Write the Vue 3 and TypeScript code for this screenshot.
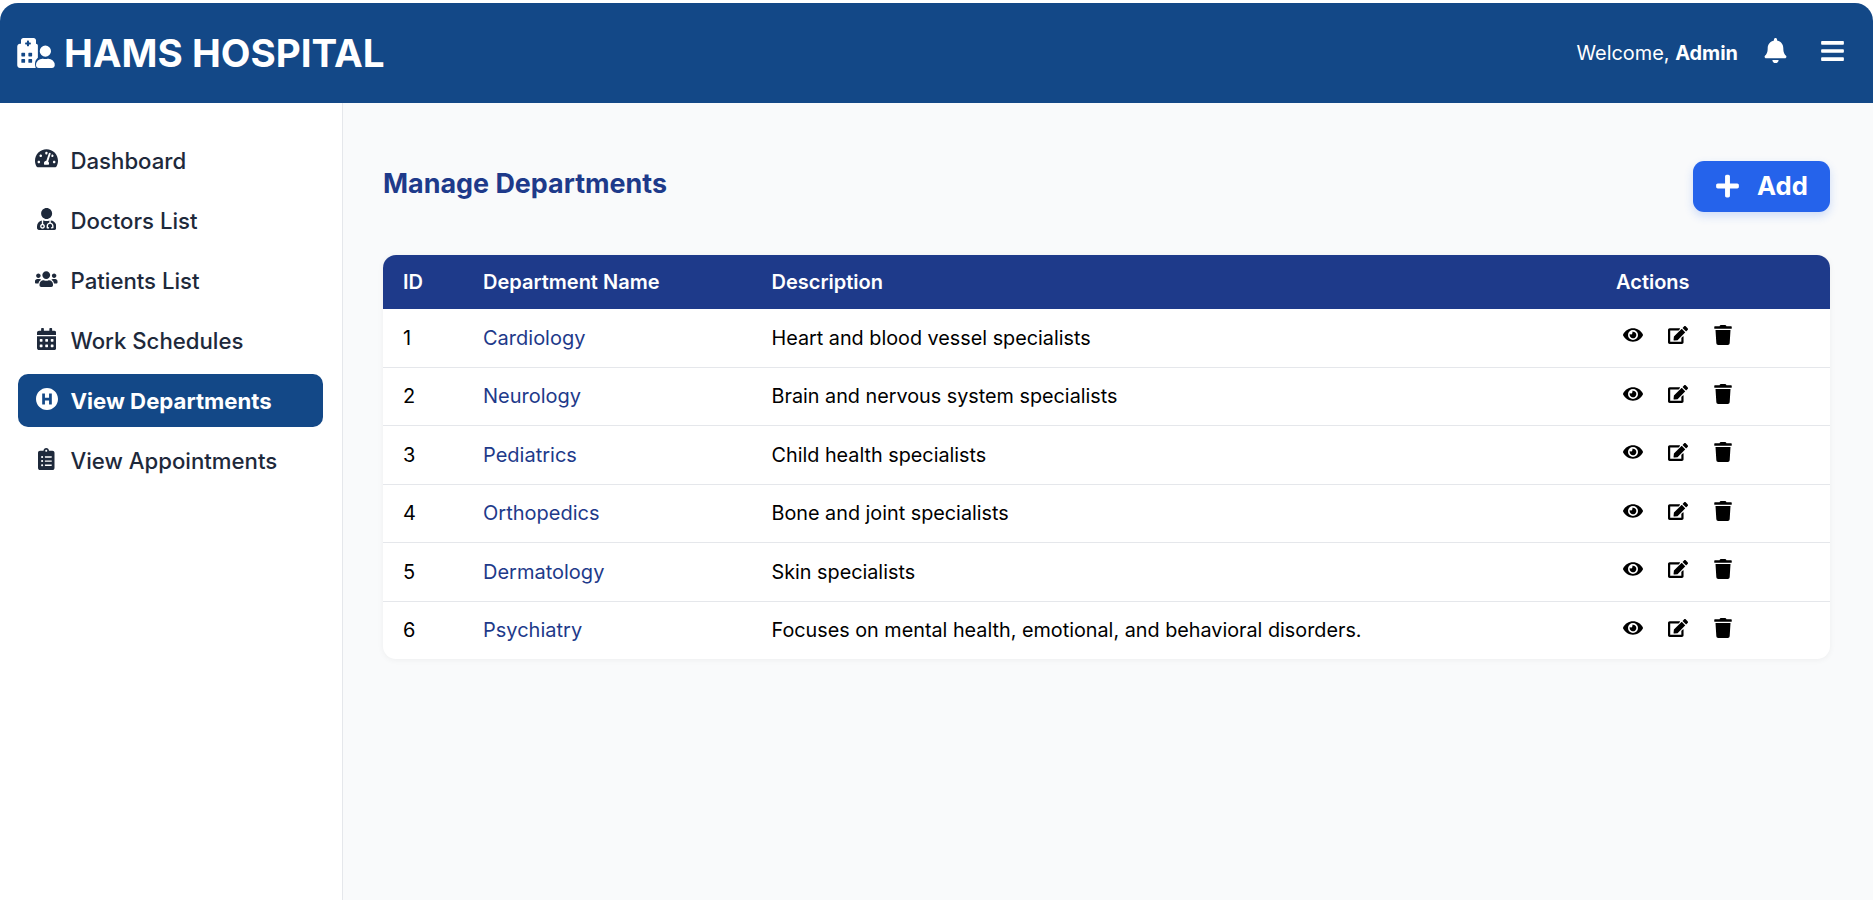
<template>
  <div class="page">
    <header class="topbar">
      <div class="brand">
        <svg class="brand-icon" viewBox="0 0 640 512">
          <path :d="icons.building" fill-rule="evenodd" />
          <path :d="icons.person" />
        </svg>
        <span>HAMS HOSPITAL</span>
      </div>
      <div class="top-right">
        <span class="welcome">Welcome, <b>Admin</b></span>
        <svg class="bell" viewBox="0 0 448 512"><path :d="icons.bell" /></svg>
        <svg class="bars" viewBox="0 0 448 512"><path :d="icons.bars" /></svg>
      </div>
    </header>

    <div class="body">
      <aside class="sidebar">
        <div v-for="item in nav" :key="item.label" :class="['nav-item', { active: item.active }]">
          <span class="nav-icon">
            <svg :viewBox="item.box" :style="{ height: item.size + 'px' }"><path :d="item.icon" /></svg>
          </span>
          <span>{{ item.label }}</span>
        </div>
      </aside>

      <main class="content">
        <div class="title-row">
          <h1>Manage Departments</h1>
          <button class="add-btn">
            <svg viewBox="0 0 448 512"><path :d="icons.plus" /></svg>
            <span>Add</span>
          </button>
        </div>

        <div class="table-card">
          <table>
            <colgroup>
              <col class="c-id" />
              <col class="c-name" />
              <col class="c-desc" />
              <col />
            </colgroup>
            <thead>
              <tr>
                <th>ID</th>
                <th>Department Name</th>
                <th>Description</th>
                <th>Actions</th>
              </tr>
            </thead>
            <tbody>
              <tr v-for="row in departments" :key="row.id">
                <td>{{ row.id }}</td>
                <td class="dept">{{ row.name }}</td>
                <td class="desc">{{ row.description }}</td>
                <td>
                  <div class="actions">
                    <svg class="a-eye" viewBox="0 0 576 512"><path :d="icons.eye" /></svg>
                    <svg class="a-edit" viewBox="0 0 576 512"><path :d="icons.edit" /></svg>
                    <svg class="a-trash" viewBox="0 0 448 512"><path :d="icons.trash" /></svg>
                  </div>
                </td>
              </tr>
            </tbody>
          </table>
        </div>
      </main>
    </div>
  </div>
</template>

<script setup lang="ts">
const icons = {
  building:
    'M48 96h16V40C64 18 82 0 104 0h176c22 0 40 18 40 40v56h0c18 0 32 14 32 32v210c-22 18-40 44-46 74-4 20-6 50 10 100H48c-26 0-48-22-48-48V144c0-26 22-48 48-48zM176 44c-6 0-10 4-10 10v22h-22c-6 0-10 4-10 10v14c0 6 4 10 10 10h22v22c0 6 4 10 10 10h14c6 0 10-4 10-10v-22h22c6 0 10-4 10-10V86c0-6-4-10-10-10h-22V54c0-6-4-10-10-10zM80 250c-6 0-10 4-10 10v44c0 6 4 10 10 10h44c6 0 10-4 10-10v-44c0-6-4-10-10-10zm120 0c-6 0-10 4-10 10v44c0 6 4 10 10 10h44c6 0 10-4 10-10v-44c0-6-4-10-10-10zM80 360c-6 0-10 4-10 10v44c0 6 4 10 10 10h44c6 0 10-4 10-10v-44c0-6-4-10-10-10zm120 0c-6 0-10 4-10 10v44c0 6 4 10 10 10h44c6 0 10-4 10-10v-44c0-6-4-10-10-10z',
  person:
    'M480 320a96 96 0 1 0-96-96 96 96 0 0 0 96 96zm48 32a22.88 22.88 0 0 0-7.06 1.09 124.76 124.76 0 0 1-81.89 0A22.82 22.82 0 0 0 432 352a112 112 0 0 0-112 112.62c.14 26.26 21.73 47.38 48 47.38h224c26.27 0 47.86-21.12 48-47.38A112 112 0 0 0 528 352z',
  bell: 'M224 512c35.32 0 63.97-28.65 63.97-64H160.03c0 35.35 28.65 64 63.97 64zm215.39-149.71c-19.32-20.76-55.47-51.99-55.47-154.29 0-77.7-54.48-139.9-127.94-155.16V32c0-17.67-14.32-32-31.98-32s-31.98 14.33-31.98 32v20.84C118.56 68.1 64.08 130.3 64.08 208c0 102.3-36.15 133.53-55.47 154.29-6 6.45-8.66 14.16-8.61 21.71.11 16.4 12.98 32 32.1 32h383.8c19.12 0 32-15.6 32.1-32 .05-7.55-2.61-15.27-8.61-21.71z',
  bars: 'M16 132h416c8.837 0 16-7.163 16-16V76c0-8.837-7.163-16-16-16H16C7.163 60 0 67.163 0 76v40c0 8.837 7.163 16 16 16zm0 160h416c8.837 0 16-7.163 16-16v-40c0-8.837-7.163-16-16-16H16c-8.837 0-16 7.163-16 16v40c0 8.837 7.163 16 16 16zm0 160h416c8.837 0 16-7.163 16-16v-40c0-8.837-7.163-16-16-16H16c-8.837 0-16 7.163-16 16v40c0 8.837 7.163 16 16 16z',
  plus: 'M416 208H272V64c0-17.67-14.33-32-32-32h-32c-17.67 0-32 14.33-32 32v144H32c-17.67 0-32 14.33-32 32v32c0 17.67 14.33 32 32 32h144v144c0 17.67 14.33 32 32 32h32c17.67 0 32-14.33 32-32V304h144c17.67 0 32-14.33 32-32v-32c0-17.67-14.33-32-32-32z',
  eye: 'M572.52 241.4C518.29 135.59 410.93 64 288 64S57.68 135.64 3.48 241.41a32.35 32.35 0 0 0 0 29.19C57.71 376.41 165.07 448 288 448s230.32-71.64 284.52-177.41a32.35 32.35 0 0 0 0-29.19zM288 400a144 144 0 1 1 144-144 143.93 143.93 0 0 1-144 144zm0-240a95.31 95.31 0 0 0-25.31 3.79 47.85 47.85 0 0 1-66.9 66.9A95.78 95.78 0 1 0 288 160z',
  edit: 'M402.6 83.2l90.2 90.2c3.8 3.8 3.8 10 0 13.8L274.4 405.6l-92.8 10.3c-12.4 1.4-22.9-9.1-21.5-21.5l10.3-92.8L388.8 83.2c3.8-3.8 10-3.8 13.8 0zm162-22.9l-48.8-48.8c-15.2-15.2-39.9-15.2-55.2 0l-35.4 35.4c-3.8 3.8-3.8 10 0 13.8l90.2 90.2c3.8 3.8 10 3.8 13.8 0l35.4-35.4c15.2-15.3 15.2-40 0-55.2zM384 346.2V448H64V128h231.8c3.2 0 6.2-1.3 8.5-3.5l40-40c7.6-7.6 2.2-20.5-8.5-20.5H48C21.5 64 0 85.5 0 112v352c0 26.5 21.5 48 48 48h352c26.5 0 48-21.5 48-48V306.2c0-10.7-12.9-16-20.5-8.5l-40 40c-2.2 2.3-3.5 5.3-3.5 8.5z',
  trash:
    'M432 32H312l-9.4-18.7A24 24 0 0 0 281.1 0H166.8a23.72 23.72 0 0 0-21.4 13.3L136 32H16A16 16 0 0 0 0 48v32a16 16 0 0 0 16 16h416a16 16 0 0 0 16-16V48a16 16 0 0 0-16-16zM53.2 467a48 48 0 0 0 47.9 45h245.8a48 48 0 0 0 47.9-45L416 128H32z',
}

const nav = [
  {
    label: 'Dashboard',
    box: '0 0 576 512',
    size: 20.5,
    icon: 'M288 32C128.94 32 0 160.94 0 320c0 52.8 14.25 102.26 39.06 144.8 5.61 9.62 16.3 15.2 27.44 15.2h443c11.14 0 21.83-5.58 27.44-15.2C561.75 422.26 576 372.8 576 320c0-159.06-128.94-288-288-288zm0 64c14.71 0 26.58 10.13 30.32 23.65-1.11 2.26-2.64 4.23-3.45 6.67l-9.22 27.67c-5.13 3.49-10.97 6.01-17.64 6.01-17.67 0-32-14.33-32-32S270.33 96 288 96zM96 384c-17.67 0-32-14.33-32-32s14.33-32 32-32 32 14.33 32 32-14.33 32-32 32zm48-160c-17.67 0-32-14.33-32-32s14.33-32 32-32 32 14.33 32 32-14.33 32-32 32zm246.77-72.41l-61.33 184C343.13 347.33 352 364.54 352 384c0 11.72-3.38 22.55-8.88 32H232.88c-5.5-9.45-8.88-20.28-8.88-32 0-33.94 26.5-61.43 59.9-63.59l61.34-184.01c4.17-12.56 17.73-19.45 30.36-15.17 12.57 4.19 19.35 17.77 15.17 30.36zm14.66 57.2l15.52-46.55c3.47-1.29 7.13-2.23 11.05-2.23 17.67 0 32 14.33 32 32s-14.33 32-32 32c-11.38-.01-20.89-6.28-26.57-15.22zM480 384c-17.67 0-32-14.33-32-32s14.33-32 32-32 32 14.33 32 32-14.33 32-32 32z',
  },
  {
    label: 'Doctors List',
    box: '0 0 448 512',
    size: 22,
    icon: 'M224 256c70.7 0 128-57.3 128-128S294.7 0 224 0 96 57.3 96 128s57.3 128 128 128zM104 424c0 13.3 10.7 24 24 24s24-10.7 24-24-10.7-24-24-24-24 10.7-24 24zm216-135.4v49c36.5 7.4 64 39.8 64 78.4v41.7c0 7.6-5.4 14.2-12.9 15.7l-32.2 6.4c-4.3.9-8.5-1.9-9.4-6.3l-3.1-15.7c-.9-4.3 1.9-8.6 6.3-9.4l19.3-3.9V416c0-62.8-96-65.1-96 1.9v26.7l19.3 3.9c4.3.9 7.1 5.1 6.3 9.4l-3.1 15.7c-.9 4.3-5.1 7.1-9.4 6.3l-31.2-4.2c-7.9-1.1-13.8-7.8-13.8-15.9V416c0-38.6 27.5-70.9 64-78.4v-45.2c-2.2.7-4.4 1.1-6.6 1.9-18 6.3-37.3 9.8-57.4 9.8s-39.4-3.5-57.4-9.8c-7.4-2.6-14.9-4.2-22.6-5.2v81.6c23.1 6.9 40 28.1 40 53.4 0 30.9-25.1 56-56 56s-56-25.1-56-56c0-25.3 16.9-46.5 40-53.4v-80.4C48.5 301 0 355.8 0 422.4v44.8C0 491.9 20.1 512 44.8 512h358.4c24.7 0 44.8-20.1 44.8-44.8v-44.8c0-72-56.8-130.3-128-133.8z',
  },
  {
    label: 'Patients List',
    box: '0 0 640 512',
    size: 18,
    icon: 'M96 224c35.3 0 64-28.7 64-64s-28.7-64-64-64-64 28.7-64 64 28.7 64 64 64zm448 0c35.3 0 64-28.7 64-64s-28.7-64-64-64-64 28.7-64 64 28.7 64 64 64zm32 32h-64c-17.6 0-33.5 7.1-45.1 18.6 40.3 22.1 68.9 62 75.1 109.4h66c17.7 0 32-14.3 32-32v-32c0-35.3-28.7-64-64-64zm-256 0c61.9 0 112-50.1 112-112S381.9 32 320 32 208 82.1 208 144s50.1 112 112 112zm76.8 32h-8.3c-20.8 10-43.9 16-68.5 16s-47.6-6-68.5-16h-8.3C179.6 288 128 339.6 128 403.2V432c0 26.5 21.5 48 48 48h288c26.5 0 48-21.5 48-48v-28.8c0-63.6-51.6-115.2-115.2-115.2zm-223.7-13.4C161.5 263.1 145.6 256 128 256H64c-35.3 0-64 28.7-64 64v32c0 17.7 14.3 32 32 32h65.9c6.3-47.4 34.9-87.3 75.2-109.4z',
  },
  {
    label: 'Work Schedules',
    box: '0 0 448 512',
    size: 22,
    icon: 'M0 464c0 26.5 21.5 48 48 48h352c26.5 0 48-21.5 48-48V192H0v272zm320-196c0-6.6 5.4-12 12-12h40c6.6 0 12 5.4 12 12v40c0 6.6-5.4 12-12 12h-40c-6.6 0-12-5.4-12-12v-40zm0 128c0-6.6 5.4-12 12-12h40c6.6 0 12 5.4 12 12v40c0 6.6-5.4 12-12 12h-40c-6.6 0-12-5.4-12-12v-40zM192 268c0-6.6 5.4-12 12-12h40c6.6 0 12 5.4 12 12v40c0 6.6-5.4 12-12 12h-40c-6.6 0-12-5.4-12-12v-40zm0 128c0-6.6 5.4-12 12-12h40c6.6 0 12 5.4 12 12v40c0 6.6-5.4 12-12 12h-40c-6.6 0-12-5.4-12-12v-40zM64 268c0-6.6 5.4-12 12-12h40c6.6 0 12 5.4 12 12v40c0 6.6-5.4 12-12 12H76c-6.6 0-12-5.4-12-12v-40zm0 128c0-6.6 5.4-12 12-12h40c6.6 0 12 5.4 12 12v40c0 6.6-5.4 12-12 12H76c-6.6 0-12-5.4-12-12v-40zM400 64h-48V16c0-8.8-7.2-16-16-16h-32c-8.8 0-16 7.2-16 16v48H160V16c0-8.8-7.2-16-16-16h-32c-8.8 0-16 7.2-16 16v48H48C21.5 64 0 85.5 0 112v48h448v-48c0-26.5-21.5-48-48-48z',
  },
  {
    label: 'View Departments',
    box: '0 0 512 512',
    size: 22,
    active: true,
    icon: 'M256 0C114.6 0 0 114.6 0 256s114.6 256 256 256 256-114.6 256-256S397.4 0 256 0zm112 376c0 4.4-3.6 8-8 8h-48c-4.4 0-8-3.6-8-8v-88h-96v88c0 4.4-3.6 8-8 8h-48c-4.4 0-8-3.6-8-8V136c0-4.4 3.6-8 8-8h48c4.4 0 8 3.6 8 8v88h96v-88c0-4.4 3.6-8 8-8h48c4.4 0 8 3.6 8 8v240z',
  },
  {
    label: 'View Appointments',
    box: '0 0 384 512',
    size: 22,
    icon: 'M336 64h-80c0-35.3-28.7-64-64-64s-64 28.7-64 64H48C21.5 64 0 85.5 0 112v352c0 26.5 21.5 48 48 48h288c26.5 0 48-21.5 48-48V112c0-26.5-21.5-48-48-48zM96 424c-13.3 0-24-10.7-24-24s10.7-24 24-24 24 10.7 24 24-10.7 24-24 24zm0-96c-13.3 0-24-10.7-24-24s10.7-24 24-24 24 10.7 24 24-10.7 24-24 24zm0-96c-13.3 0-24-10.7-24-24s10.7-24 24-24 24 10.7 24 24-10.7 24-24 24zm96-192c13.3 0 24 10.7 24 24s-10.7 24-24 24-24-10.7-24-24 10.7-24 24-24zm128 368c0 4.4-3.6 8-8 8H168c-4.4 0-8-3.6-8-8v-16c0-4.4 3.6-8 8-8h144c4.4 0 8 3.6 8 8v16zm0-96c0 4.4-3.6 8-8 8H168c-4.4 0-8-3.6-8-8v-16c0-4.4 3.6-8 8-8h144c4.4 0 8 3.6 8 8v16zm0-96c0 4.4-3.6 8-8 8H168c-4.4 0-8-3.6-8-8v-16c0-4.4 3.6-8 8-8h144c4.4 0 8 3.6 8 8v16z',
  },
]

const departments = [
  { id: 1, name: 'Cardiology', description: 'Heart and blood vessel specialists' },
  { id: 2, name: 'Neurology', description: 'Brain and nervous system specialists' },
  { id: 3, name: 'Pediatrics', description: 'Child health specialists' },
  { id: 4, name: 'Orthopedics', description: 'Bone and joint specialists' },
  { id: 5, name: 'Dermatology', description: 'Skin specialists' },
  { id: 6, name: 'Psychiatry', description: 'Focuses on mental health, emotional, and behavioral disorders.' },
]
</script>

<style>
html,
body {
  margin: 0;
  overflow: hidden;
  background: #fff;
}
</style>

<style scoped>
.page {
  height: 900px;
  padding-top: 3px;
  box-sizing: border-box;
  display: flex;
  flex-direction: column;
  font-family: Inter, "Liberation Sans", sans-serif;
}

.topbar {
  height: 100px;
  flex: none;
  background: #134887;
  color: #fff;
  border-radius: 18px 18px 0 0;
  display: flex;
  justify-content: space-between;
  align-items: center;
  padding: 0 29px 0 17px;
}

.brand {
  display: flex;
  align-items: center;
  gap: 9px;
  font-size: 38.6px;
  font-weight: 700;
}

.brand-icon {
  width: 38px;
  height: 30px;
  fill: #fff;
}

.top-right {
  display: flex;
  align-items: center;
}

.welcome {
  font-size: 19.9px;
  margin-right: 26px;
}

.welcome b {
  font-weight: 700;
}

.bell {
  height: 25px;
  width: 23px;
  fill: #fff;
  margin-right: 34px;
  margin-top: -5px;
}

.bars {
  height: 26px;
  width: 23px;
  fill: #fff;
  margin-top: -5px;
}

.body {
  flex: 1;
  display: flex;
  min-height: 0;
}

.sidebar {
  width: 343px;
  flex: none;
  box-sizing: border-box;
  background: #fff;
  border-right: 1px solid #e5e7eb;
  padding: 31px 19px 0 18px;
  display: flex;
  flex-direction: column;
  gap: 7px;
}

.nav-item {
  height: 53px;
  border-radius: 10px;
  display: flex;
  align-items: center;
  padding: 0 17px;
  font-size: 22.2px;
  font-weight: 500;
  color: #1e293b;
}

.nav-item.active {
  background: #134887;
  color: #fff;
  font-weight: 700;
}

.nav-icon {
  width: 35.5px;
  box-sizing: border-box;
  padding-right: 12.5px;
  flex: none;
  display: flex;
  align-items: center;
  justify-content: center;
  margin-top: -4px;
}

.nav-icon svg {
  fill: currentColor;
}

.content {
  flex: 1;
  min-width: 0;
  background: #f9fafb;
  padding: 58px 43px 0 40px;
}

.title-row {
  display: flex;
  justify-content: space-between;
  align-items: flex-start;
  height: 94px;
}

h1 {
  margin: 6px 0 0;
  font-size: 26.9px;
  font-weight: 700;
  color: #1e3a8a;
}

.add-btn {
  width: 137px;
  height: 51px;
  border: none;
  border-radius: 11px;
  background: #2563eb;
  color: #fff;
  font: 700 25.6px Inter, "Liberation Sans", sans-serif;
  display: flex;
  align-items: center;
  justify-content: center;
  gap: 18px;
  padding: 0 0 2px 1px;
  box-shadow: 0 4px 10px rgba(37, 99, 235, 0.2);
}

.add-btn svg {
  height: 26px;
  width: 23px;
  fill: #fff;
}

.table-card {
  background: #fff;
  border-radius: 13px;
  overflow: hidden;
  box-shadow: 0 1px 6px rgba(0, 0, 0, 0.05);
}

table {
  width: 100%;
  border-collapse: collapse;
  table-layout: fixed;
  font-size: 20px;
}

.c-id {
  width: 80px;
}

.c-name {
  width: 288.5px;
}

.c-desc {
  width: 844.5px;
}

th {
  height: 54px;
  padding: 0 0 0 20px;
  background: #1e3a8a;
  color: #fff;
  font-weight: 600;
  text-align: left;
}

td {
  height: 57.5px;
  padding: 0 0 0 20px;
  color: #000;
  border-top: 1px solid #e5e7eb;
}

tbody tr:first-child td {
  border-top: none;
}

.dept {
  color: #1e3a8a;
}

.desc {
  font-size: 19.8px;
}

.actions {
  display: flex;
  align-items: center;
  gap: 25px;
  margin-top: -5px;
  padding-left: 6.5px;
}

.actions svg {
  fill: #000;
}

.a-eye,
.a-edit {
  height: 18px;
  width: 20px;
}

.a-trash {
  height: 20px;
  width: 18px;
  margin-left: 1px;
}
</style>
